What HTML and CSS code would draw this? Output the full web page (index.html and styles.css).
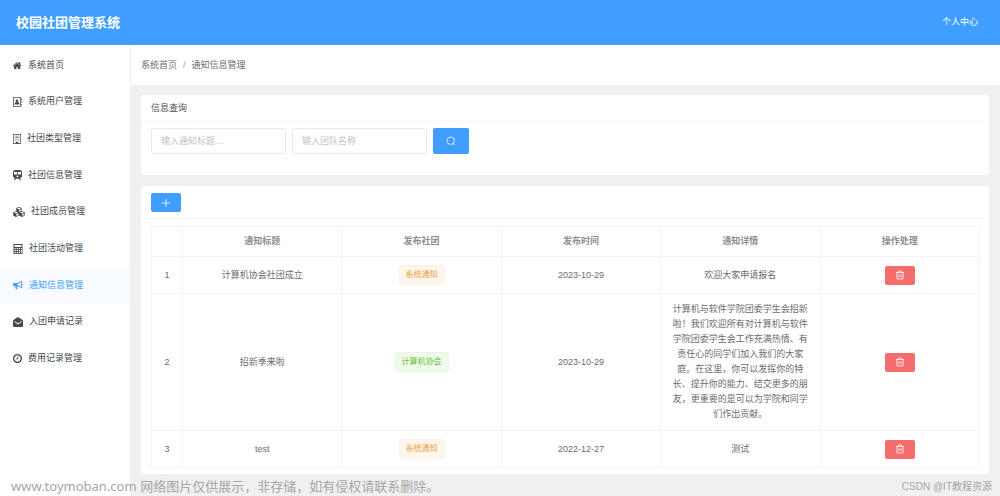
FILE: index.html
```html
<!DOCTYPE html>
<html lang="zh-CN">
<head>
<meta charset="utf-8">
<title>校园社团管理系统</title>
<link rel="stylesheet" href="styles.css">
</head>
<body>
<header class="topbar">
  <h1 class="brand">校园社团管理系统</h1>
  <a class="account" href="#">个人中心</a>
</header>
<div class="layout">
  <nav class="sidebar">
    <ul class="menu">
      <li><a class="menu-link" href="#"><svg class="ico" width="9" height="9" viewBox="64 100 1664 1550"><path d="M1408 992v480q0 26-19 45t-45 19h-384v-384h-256v384h-384q-26 0-45-19t-19-45v-480q0-1 .5-3t.5-3l575-474 575 474q1 2 1 6zm223-69l-62 74q-8 9-21 11h-3q-13 0-21-7l-692-577-692 577q-12 8-24 7-13-2-21-11l-62-74q-8-10-7-23.5t11-21.5l719-599q32-26 76-26t76 26l244 204v-195q0-14 9-23t23-9h192q14 0 23 9t9 23v408l219 182q10 8 11 21.5t-7 23.5z"/></svg>系统首页</a></li>
      <li><a class="menu-link" href="#"><svg class="ico" width="9" height="10" viewBox="0 0 18 20"><path fill-rule="evenodd" d="M1.500 0H14.500Q16 0 16 1.500V18.500Q16 20 14.500 20H1.500Q0 20 0 18.500V1.500Q0 0 1.500 0ZM1.500 1.500V18.500H14.500V1.500Z"/><circle cx="8" cy="7.500" r="2.700"/><path d="M3.500 15V13Q3.500 10 6 10H10Q12.500 10 12.500 13V15ZM16 3H17.500V6H16ZM16 8.500H17.500V11.500H16ZM16 14H17.500V17H16Z"/></svg>系统用户管理</a></li>
      <li><a class="menu-link" href="#"><svg class="ico" width="8" height="10" viewBox="0 0 16 20"><path fill-rule="evenodd" d="M0 0H16V20H0ZM1.300 1.300V18.700H5.500V15.500H10.500V18.700H14.700V1.300Z"/><path d="M3.500 3.500h1.500V5H3.500ZM6 3.500h1.500V5H6ZM8.500 3.500H10V5H8.500ZM11 3.500h1.500V5H11ZM3.500 6.500h1.500V8H3.500ZM6 6.500h1.500V8H6ZM8.500 6.500H10V8H8.500ZM11 6.500h1.500V8H11ZM3.500 9.500h1.500V11H3.500ZM6 9.500h1.500V11H6ZM8.500 9.500H10V11H8.500ZM11 9.500h1.500V11H11ZM3.500 12.500h1.500V14H3.500ZM11 12.500h1.500V14H11Z"/></svg>社团类型管理</a></li>
      <li><a class="menu-link" href="#"><svg class="ico" width="9" height="10" viewBox="0 0 18 20"><path fill-rule="evenodd" d="M5 0H13Q18 0 18 4V12Q18 15.500 14 16L16.500 20H14L12 17.500H6L4 20H1.500L4 16Q0 15.500 0 12V4Q0 0 5 0ZM2 4V9H8.200V4ZM9.800 4V9H16V4ZM9 11A1.800 1.800 0 1 0 9 14.600A1.800 1.800 0 1 0 9 11Z"/></svg>社团信息管理</a></li>
      <li><a class="menu-link" href="#"><svg class="ico" width="12" height="10" viewBox="0 0 24 20"><path fill-rule="evenodd" d="M12 0L17.500 2.200V8L23.500 10.500V17L18 20L12 17L6 20L.5 17V10.500L6.500 8V2.200ZM12 1.500L8 3.200L12 4.800L16 3.200ZM12.700 6.200V9.800L16.200 8.300V4.700ZM6 9.500L2.200 11.200L6 12.800L9.800 11.200ZM6.700 14.200V18L11 15.800V12.400ZM18 9.500L14.200 11.200L18 12.800L21.800 11.200ZM18.700 14.200V18L22.200 16.200V12.700Z"/></svg>社团成员管理</a></li>
      <li><a class="menu-link" href="#"><svg class="ico" width="10" height="10" viewBox="0 0 20 20"><path fill-rule="evenodd" d="M1 0H19V20H1ZM3 2V6H17V2ZM3 8V10.500H5.500V8ZM7.300 8V10.500H9.800V8ZM11.600 8V10.500H14V8ZM15.500 8V10.500H17.500V8ZM3 12V14.500H5.500V12ZM7.300 12V14.500H9.800V12ZM11.600 12V14.500H14V12ZM3 16V18.500H5.500V16ZM7.300 16V18.500H9.800V16ZM11.600 16V18.500H14V16ZM15.500 12V18.500H17.500V12Z"/></svg>社团活动管理</a></li>
      <li><a class="menu-link active" href="#" aria-current="page"><svg class="ico" width="10" height="10" viewBox="0 0 20 20"><path fill-rule="evenodd" d="M18 1V7Q20 7.500 20 9Q20 10.500 18 11V17Q13 12.500 8.500 12.300Q7 13.200 8 14.500Q7.300 15.800 9.500 17Q8.500 19 5.500 18Q4 14.500 4.500 12.200H2Q0 12.200 0 10.500V7.500Q0 5.800 2 5.800H7.500Q12.500 5.500 18 1ZM16.500 4Q12.500 7 9 7.300V10.700Q12.500 11 16.500 14Z"/></svg>通知信息管理</a></li>
      <li><a class="menu-link" href="#"><svg class="ico" width="10" height="10" viewBox="0 0 20 20"><path fill-rule="evenodd" d="M0 8Q0 7 1 6.200L8 1Q10 -.5 12 1L19 6.200Q20 7 20 8V18Q20 20 18 20H2Q0 20 0 18ZM2.500 9.500L8.500 14Q10 15 11.500 14L17.500 9.500L16.500 8.300L11 12.200Q10 13 9 12.200L3.500 8.300Z"/></svg>入团申请记录</a></li>
      <li><a class="menu-link" href="#"><svg class="ico" width="9" height="9" viewBox="128 128 1536 1536"><path d="M1024 544v448q0 14-9 23t-23 9h-320q-14 0-23-9t-9-23v-64q0-14 9-23t23-9h224v-352q0-14 9-23t23-9h64q14 0 23 9t9 23zm416 352q0-148-73-273t-198-198-273-73-273 73-198 198-73 273 73 273 198 198 273 73 273-73 198-198 73-273zm224 0q0 209-103 385.500t-279.500 279.500-385.500 103-385.500-103-279.500-279.500-103-385.500 103-385.500 279.500-279.500 385.500-103 385.500 103 279.500 279.500 103 385.500z"/></svg>费用记录管理</a></li>
    </ul>
  </nav>
  <div class="content">
    <nav class="crumbs" aria-label="面包屑">
      <a href="#">系统首页</a><span class="sep">/</span><span>通知信息管理</span>
    </nav>
    <main class="panels">
      <section class="card">
        <h2 class="card-head">信息查询</h2>
        <form class="search">
          <input class="field" type="text" placeholder="输入通知标题…" aria-label="通知标题">
          <input class="field" type="text" placeholder="输入团队名称" aria-label="团队名称">
          <button class="btn btn-search" type="button" aria-label="搜索"><svg width="10" height="10" viewBox="0 0 20 20"><circle cx="9.500" cy="9.500" r="7.500"/><path d="M14.500 14.500L18 18"/></svg></button>
        </form>
      </section>
      <section class="card">
        <div class="toolbar">
          <button class="btn btn-small" type="button" aria-label="新增"><svg width="10" height="10" viewBox="0 0 20 20"><path d="M10 2V18M2 10H18"/></svg></button>
        </div>
        <div class="table-wrap">
          <table class="grid">
            <thead>
              <tr><th class="num"></th><th>通知标题</th><th>发布社团</th><th>发布时间</th><th>通知详情</th><th>操作处理</th></tr>
            </thead>
            <tbody>
              <tr>
                <td>1</td><td>计算机协会社团成立</td><td><span class="tag tag-warn">系统通知</span></td><td>2023-10-29</td><td>欢迎大家申请报名</td>
                <td><button class="btn btn-small btn-danger" type="button" aria-label="删除"><svg width="10" height="10" viewBox="0 0 20 20"><path d="M2 5H18M7 5V2H13V5M4 5V18H16V5M8 8.500V14.500M12 8.500V14.500"/></svg></button></td>
              </tr>
              <tr>
                <td>2</td><td>招新季来啦</td><td><span class="tag tag-ok">计算机协会</span></td><td>2023-10-29</td><td>计算机与软件学院团委学生会招新啦！我们欢迎所有对计算机与软件学院团委学生会工作充满热情、有责任心的同学们加入我们的大家庭。在这里，你可以发挥你的特长、提升你的能力、结交更多的朋友，更重要的是可以为学院和同学们作出贡献。</td>
                <td><button class="btn btn-small btn-danger" type="button" aria-label="删除"><svg width="10" height="10" viewBox="0 0 20 20"><path d="M2 5H18M7 5V2H13V5M4 5V18H16V5M8 8.500V14.500M12 8.500V14.500"/></svg></button></td>
              </tr>
              <tr>
                <td>3</td><td>test</td><td><span class="tag tag-warn">系统通知</span></td><td>2022-12-27</td><td>测试</td>
                <td><button class="btn btn-small btn-danger" type="button" aria-label="删除"><svg width="10" height="10" viewBox="0 0 20 20"><path d="M2 5H18M7 5V2H13V5M4 5V18H16V5M8 8.500V14.500M12 8.500V14.500"/></svg></button></td>
              </tr>
            </tbody>
          </table>
        </div>
      </section>
    </main>
  </div>
</div>
<p class="mark mark-left"><span class="mark-site">www.toymoban.com</span> 网络图片仅供展示，非存储，如有侵权请联系删除。</p>
<p class="mark mark-right">CSDN @IT教程资源</p>
</body>
</html>
```
FILE: styles.css
```css
* {
  box-sizing: border-box;
}

body {
  position: relative;
  display: flex;
  flex-direction: column;
  min-height: 100vh;
  margin: 0;
  background: #f0f0f0;
  color: #6a6c70;
  font: 9px/15px "Liberation Sans", "Noto Sans CJK SC", sans-serif;
}

a {
  color: inherit;
  text-decoration: none;
}

svg {
  display: block;
}

.topbar {
  display: flex;
  align-items: center;
  justify-content: space-between;
  height: 45px;
  padding: 0 22px 0 16px;
  background: #409eff;
  color: #fff;
}

.brand {
  margin: 0;
  font-size: 13px;
  line-height: 20px;
}

.layout {
  display: flex;
  flex: 1;
}

.sidebar {
  flex: none;
  width: 131px;
  border-right: 1px solid #f0f0f0;
  background: #fff;
}

.menu {
  display: grid;
  grid-auto-rows: 1fr;
  min-height: 332px;
  margin: 0;
  padding: 2px 0 0;
  list-style: none;
}

.menu-link {
  display: flex;
  align-items: center;
  gap: 6px;
  height: 100%;
  padding: 0 13px;
  color: #46484c;
}

.menu-link.active {
  background: #f8fbff;
  color: #409eff;
}

.ico {
  flex: none;
  fill: currentColor;
}

.content {
  flex: 1;
  min-width: 0;
}

.crumbs {
  display: flex;
  align-items: center;
  gap: 6px;
  height: 40px;
  padding: 0 10px;
  background: #fff;
}

.sep {
  color: #a0a4ac;
}

.panels {
  display: grid;
  gap: 11px;
  padding: 10px 11px 22px 10px;
}

.card {
  border-radius: 3px;
  background: #fff;
}

.card-head {
  margin: 0;
  padding: 6px 10px 5px;
  border-bottom: 1px solid #f5f6fa;
  font-size: 9px;
  font-weight: 400;
  line-height: 15px;
  color: #505256;
}

.search {
  display: flex;
  gap: 6px;
  padding: 6px 10px 21px;
}

.field {
  width: 135px;
  height: 26px;
  padding: 0 9px;
  border: 1px solid #e8eaef;
  border-radius: 3px;
  background: #fff;
  color: #606266;
  font: inherit;
}

.field::placeholder {
  color: #c0c4cc;
}

.btn {
  display: inline-flex;
  align-items: center;
  justify-content: center;
  padding: 0;
  border: 0;
  border-radius: 2px;
  background: #409eff;
  color: #fff;
}

.btn svg {
  fill: none;
  stroke: currentColor;
  stroke-width: 1.6;
}

.btn-search {
  width: 36px;
  height: 26px;
}

.btn-small {
  width: 30px;
  height: 19px;
}

.btn-danger {
  background: #f56c6c;
}

.toolbar {
  display: flex;
  padding: 7px 10px 6px;
  border-bottom: 1px solid #f3f4f9;
}

.table-wrap {
  padding: 7px 9px 6px 10px;
}

.grid {
  width: 100%;
  table-layout: fixed;
  border-collapse: collapse;
}

.grid th,
.grid td {
  padding: 8px 10px;
  border: 1px solid #f2f4f9;
  text-align: center;
  vertical-align: middle;
}

.grid th {
  padding: 7px 10px;
  color: #8b8e94;
}

.grid .num {
  width: 31px;
}

.grid .btn,
.tag {
  vertical-align: middle;
}

.grid .btn {
  margin: -2px 0;
}

.tag {
  display: inline-block;
  padding: 0 6px;
  border: 1px solid;
  border-radius: 3px;
  font-size: 8px;
  line-height: 18px;
}

.tag-warn {
  border-color: #fcf1e2;
  background: #fdf6ec;
  color: #e6a23c;
}

.tag-ok {
  border-color: #e9f6e2;
  background: #f0f9eb;
  color: #67c23a;
}

.mark {
  position: absolute;
  margin: 0;
  color: #a6a6a6;
  white-space: nowrap;
}

.mark-left {
  bottom: 0;
  left: 11px;
  font-size: 13px;
  line-height: 18px;
}

.mark-site {
  font-family: "Noto Sans", sans-serif;
}

.mark-right {
  right: 8px;
  bottom: 2px;
  font-size: 10px;
  line-height: 15px;
}
```
